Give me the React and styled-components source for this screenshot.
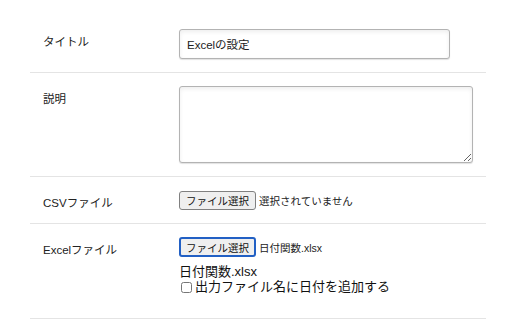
import styled, { createGlobalStyle } from 'styled-components'

const GlobalStyle = createGlobalStyle`
  body {
    margin: 0;
    background: #fff;
    font-family: "Liberation Sans", "Noto Sans CJK JP", sans-serif;
    color: #222;
  }
`

const Page = styled.div`
  width: 456px;
  padding: 16px 0 0 30px;
`

const Row = styled.div`
  display: grid;
  grid-template-columns: 149px 1fr;
  padding: 13px 0 ${(p) => p.$bottom || 13}px;
  border-bottom: 1px solid #e4e4e4;
`

const Label = styled.div`
  padding: 6px 0 0 13px;
  font-size: 11.5px;
  line-height: 14px;
  color: #222;
`

const Field = styled.div`
  display: flex;
  flex-direction: column;
  align-items: flex-start;
`

const TextInput = styled.input`
  box-sizing: border-box;
  width: 271px;
  height: 30px;
  padding: 0 7px;
  border: 1px solid #b3b3b3;
  border-radius: 3px;
  font-family: inherit;
  font-size: 11.5px;
  color: #222;
  box-shadow: inset 0 2px 4px rgba(0, 0, 0, 0.07), 0 1px 1px rgba(0, 0, 0, 0.12);
  outline: none;
`

const TextArea = styled.textarea`
  display: block;
  box-sizing: border-box;
  width: 294px;
  height: 77px;
  border: 1px solid #b3b3b3;
  border-radius: 3px;
  box-shadow: inset 0 2px 4px rgba(0, 0, 0, 0.07), 0 1px 1px rgba(0, 0, 0, 0.12);
  outline: none;
  font-family: inherit;
`

const FileLine = styled.div`
  display: flex;
  align-items: center;
  gap: 3px;
  font-size: 10.5px;
  color: #222;
`

const FileButton = styled.button`
  box-sizing: border-box;
  width: 77px;
  height: ${(p) => (p.$focused ? 20 : 19)}px;
  padding: 0;
  background: #efefef;
  border: ${(p) => (p.$focused ? '2px solid #2260c4' : '1px solid #808080')};
  border-radius: 3px;
  font-family: inherit;
  font-size: 10.5px;
  color: #111;
`

const FileName = styled.div`
  margin-top: 7px;
  font-size: 13px;
  line-height: 15px;
  color: #111;
`

const CheckLine = styled.label`
  display: flex;
  align-items: flex-end;
  font-size: 13px;
  line-height: 15px;
  color: #111;
  input {
    width: 11px;
    height: 11px;
    margin: 0 3px 1px 2px;
  }
`

const App = () => {
  return <>
    <GlobalStyle />
    <Page>
      <Row>
        <Label>タイトル</Label>
        <Field>
          <TextInput defaultValue="Excelの設定" />
        </Field>
      </Row>
      <Row>
        <Label>説明</Label>
        <Field>
          <TextArea />
        </Field>
      </Row>
      <Row>
        <Label>CSVファイル</Label>
        <FileLine>
          <FileButton>ファイル選択</FileButton>
          <span>選択されていません</span>
        </FileLine>
      </Row>
      <Row $bottom={24}>
        <Label>Excelファイル</Label>
        <Field>
          <FileLine>
            <FileButton $focused>ファイル選択</FileButton>
            <span>日付関数.xlsx</span>
          </FileLine>
          <FileName>日付関数.xlsx</FileName>
          <CheckLine>
            <input type="checkbox" />
            出力ファイル名に日付を追加する
          </CheckLine>
        </Field>
      </Row>
    </Page>
  </>
}

export default App
